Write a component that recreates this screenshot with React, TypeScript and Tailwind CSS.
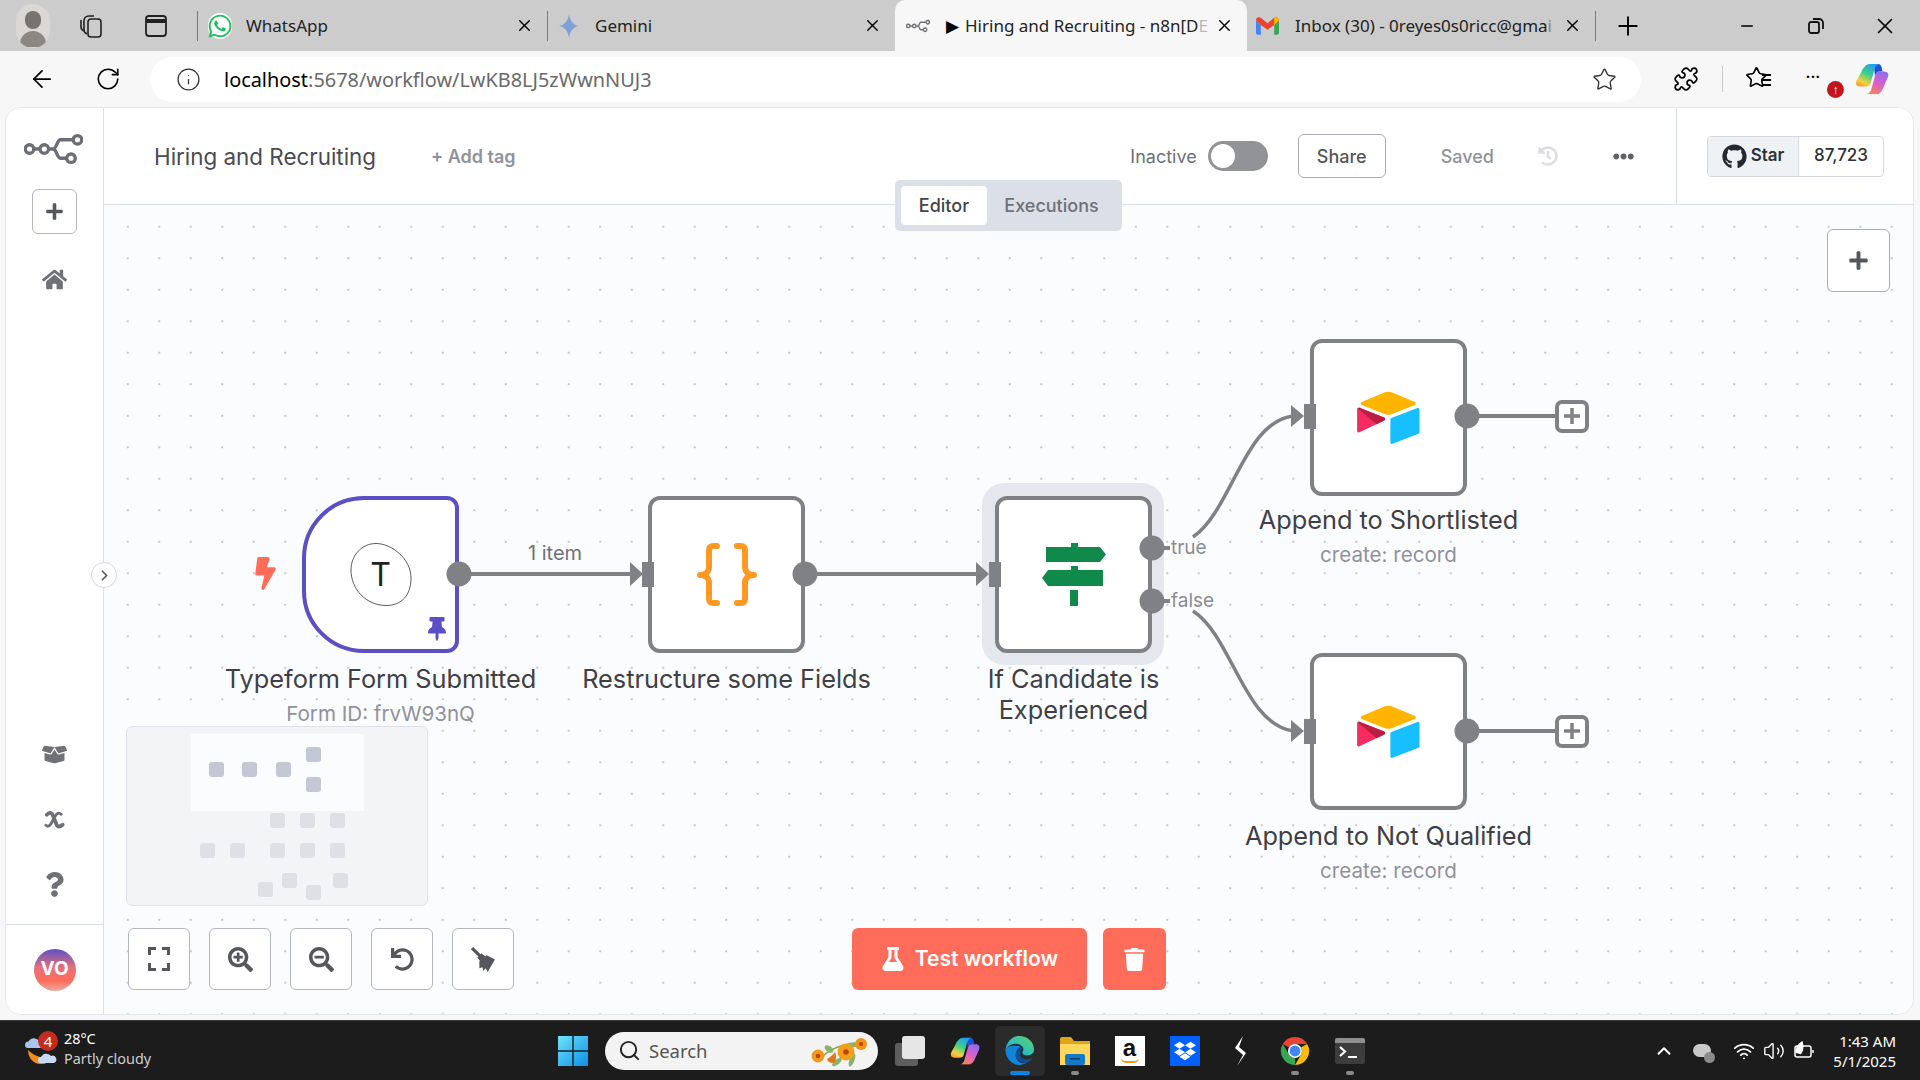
import { ArrowLeft, ChevronRight, ChevronUp, Info, Minus, Plus, Puzzle, RotateCw, Search, Star, Volume2, Wifi, X } from 'lucide-react';
import {
    FaBolt,
    FaBoxOpen,
    FaDropbox,
    FaEllipsisH,
    FaFlask,
    FaGithub,
    FaHistory,
    FaHome,
    FaPlus,
    FaQuestion,
    FaSearchMinus,
    FaSearchPlus,
    FaThumbtack,
    FaTrash,
    FaUndo,
    FaWhatsapp,
} from 'react-icons/fa';
import type { ReactNode } from 'react';

const EDGE = '#7f8185';

function N8nLogo({ className }: { className: string }) {
    return (
        <svg viewBox="0 0 64 34" fill="none" stroke="currentColor" strokeWidth="3.6" className={className}>
            <circle cx="6" cy="17" r="4.6" />
            <circle cx="22" cy="17" r="4.6" />
            <circle cx="58" cy="7" r="4.6" />
            <circle cx="51" cy="27" r="4.6" />
            <path d="M10.6 17h6.8M26.6 17h5c4 0 4-10 8-10h13.400M31.600 17c4 0 4 10 8 10h6.800" />
        </svg>
    );
}

function AirtableLogo() {
    return (
        <svg viewBox="0 0 200 170" className="w-[71px] h-[60px]">
            <path fill="#ffb400" d="M90.039 12.368 24.079 39.66c-3.667 1.519-3.63 6.729.062 8.192l66.235 26.266a24.58 24.58 0 0 0 18.12 0l66.236-26.266c3.69-1.463 3.729-6.673.062-8.192l-65.96-27.292a24.58 24.58 0 0 0-18.795 0" />
            <path fill="#18bfff" d="M105.312 88.46v65.617c0 3.12 3.147 5.258 6.048 4.108l73.806-28.648a4.42 4.42 0 0 0 2.79-4.108V60.813c0-3.121-3.147-5.258-6.048-4.108l-73.806 28.648a4.42 4.42 0 0 0-2.79 4.108" />
            <path fill="#f82b60" d="M88.078 91.846l-21.904 10.576-2.224 1.075-46.238 22.155c-2.93 1.414-6.672-.722-6.672-3.978V60.088c0-1.178.604-2.195 1.414-2.96a5 5 0 0 1 1.12-.84c1.104-.663 2.68-.84 4.02-.31L87.71 83.76c3.564 1.414 3.844 6.408.368 8.087" />
            <path fill="#ba1e45" d="M88.078 91.846l-21.904 10.576-53.72-45.295a5 5 0 0 1 1.12-.84c1.104-.663 2.68-.84 4.02-.31L87.71 83.76c3.564 1.414 3.844 6.408.368 8.087" />
        </svg>
    );
}

function NodeBox({ className, children, label }: { className: string; children: ReactNode; label: ReactNode }) {
    return (
        <div className={`absolute w-[157px] h-[157px] bg-white border-4 flex items-center justify-center ${className}`}>
            {children}
            <div className="absolute top-full left-1/2 -translate-x-1/2 w-[360px] mt-[14px] text-center text-[25.300px] leading-[31px] text-[#3f4046]">
                {label}
            </div>
        </div>
    );
}

function SubLabel({ children }: { children: ReactNode }) {
    return <div className="mt-[5px] text-[20.600px] leading-[30px] text-[#8f929b]">{children}</div>;
}

function ToolButton({ children }: { children: ReactNode }) {
    return (
        <button className="w-[62px] h-[62px] flex items-center justify-center bg-white border border-[#b4b7c0] rounded-[6px] text-[#55575c]">
            {children}
        </button>
    );
}

function Tab({ icon, title, iconPad, active, w }: { icon: ReactNode; title: ReactNode; iconPad: string; active?: boolean; w: string }) {
    return (
        <div className={`flex items-center h-full pr-[13px] shrink-0 ${w} ${iconPad} ${active ? 'bg-[#f7f7f7] rounded-t-[10px]' : ''}`}>
            {icon}
            <span className="flex-1 whitespace-nowrap text-[17px] text-[#222]">{title}</span>
            <X size={19} strokeWidth={1.8} className="ml-[6px] shrink-0 text-black" />
        </div>
    );
}

function WeatherIcon() {
    return (
        <div className="relative w-[36px] h-[40px] shrink-0">
            <svg viewBox="0 0 36 40" className="w-[36px] h-[40px]">
                <path d="M4 19c0 9 7 15 14 14 4 0 7-2 9-6-8 1-17-2-23-8z" fill="#f08c1d" />
                <path d="M1 14a3.500 3.500 0 0 1 3.500-3.500A6 6 0 0 1 15 10a3.500 3.500 0 0 1 1 7H3a3 3 0 0 1-2-3z" fill="#a9c4ef" />
                <path d="M14 29a3 3 0 0 1 3-3 6 6 0 0 1 10-1 3.500 3.500 0 0 1 3 7H16a3 3 0 0 1-2-3z" fill="#c6daf6" />
            </svg>
            <span className="absolute top-0 left-[14px] w-[20px] h-[20px] rounded-full bg-[#c42b1c] text-white text-[15px] leading-[20px] text-center">4</span>
        </div>
    );
}

function TaskSlot({ children, dot }: { children: ReactNode; dot?: boolean }) {
    return (
        <div className="relative w-[55px] h-[50px] flex items-center justify-center shrink-0">
            {children}
            {dot && <span className="absolute bottom-[1px] w-[8px] h-[4px] rounded-full bg-[#8a8a8a]" />}
        </div>
    );
}

function ChromeIcon() {
    return (
        <svg viewBox="0 0 32 32" className="w-[30px] h-[30px]">
            <path d="M16 1a15 15 0 0 1 13 7.500H16a7.500 7.500 0 0 0-6.500 3.750L3 8.500A15 15 0 0 1 16 1z" fill="#ea4335" />
            <path d="M29 8.500A15 15 0 0 1 16 31l6.500-11.250A7.500 7.500 0 0 0 22.500 12z" fill="#fbbc04" />
            <path d="M16 31A15 15 0 0 1 3 8.500l6.500 11.250A7.500 7.500 0 0 0 16 23.500z" fill="#34a853" />
            <circle cx="16" cy="16" r="7.500" fill="#fff" />
            <circle cx="16" cy="16" r="5.800" fill="#4285f4" />
        </svg>
    );
}

function EdgeIcon() {
    return (
        <svg viewBox="0 0 32 32" className="relative w-[31px] h-[31px]">
            <defs>
                <linearGradient id="edgetop" x1="0" y1="1" x2="1" y2="0">
                    <stop offset="0" stopColor="#1b9de2" />
                    <stop offset="0.5" stopColor="#35c1b1" />
                    <stop offset="1" stopColor="#66d45f" />
                </linearGradient>
            </defs>
            <path d="M16 1C24 1 31 7 31 15c0 4-3 6-7 6-3 0-5-1-5-3 0-1 1-2 1-3 0-3-3-6-8-6C7 9 3 12 1.500 16 2 8 8 1 16 1z" fill="url(#edgetop)" />
            <path d="M1.500 16C2 24 8 31 16 31c3 0 5-1 7-2-6 1-11-3-11-8 0-4 2-7 5-9-1-.5-3-1-5-1C7 11 2 12 1.500 16z" fill="#0f86dc" />
            <path d="M12 20c0 5 5 9 11 9 3-1 5-3 6-5-2 1-4 1-6 1-5 0-7-3-6-7 0-2 1-4 3-5-4-1-8 3-8 7z" fill="#0c4f9a" />
        </svg>
    );
}

function CopilotIcon({ className }: { className: string }) {
    return (
        <svg viewBox="0 0 48 48" className={className}>
            <defs>
                <linearGradient id="cpa" x1="0.7" y1="0" x2="0.2" y2="1">
                    <stop offset="0" stopColor="#1f9ff0" />
                    <stop offset="0.45" stopColor="#3fd08a" />
                    <stop offset="0.8" stopColor="#f5d33a" />
                    <stop offset="1" stopColor="#f59a3a" />
                </linearGradient>
                <linearGradient id="cpb" x1="0.8" y1="0" x2="0.3" y2="1">
                    <stop offset="0" stopColor="#8d6cf0" />
                    <stop offset="0.5" stopColor="#d95fd0" />
                    <stop offset="1" stopColor="#f6845a" />
                </linearGradient>
            </defs>
            <path d="M27 4h5c3 0 4 2 5 5l1 5h-4c-3 0-5 2-6 6l-1-8z" fill="#1d4fd8" />
            <path d="M14 8c2-3 4-4 8-4h12c-4 1-6 4-7 8l-5 18c-1 3-3 4-6 4H8c-4 0-6-3-5-7l7-13c1-3 2-4 4-6z" fill="url(#cpa)" />
            <path d="M19 44c3 0 6-3 6-5l3-6c1 5 3 8 6 11z" fill="#e8513a" />
            <path d="M34 14h6c5 0 7 4 5 8l-7 16c-2 4-5 6-9 6h-13c4 0 6-3 7-6l5-18c1-4 3-6 6-6z" fill="url(#cpb)" />
        </svg>
    );
}

export default function App() {
    return (
        <div className="w-[1920px] h-[1080px] overflow-hidden flex flex-col bg-[#f7f7f7] font-[Inter,sans-serif]">
            {/* Browser tab strip */}
            <div className="h-[51px] bg-[#cccccc] flex items-center shrink-0 font-['Noto_Sans',sans-serif]">
                <div className="ml-[16px] w-[34px] h-[44px] rounded-full bg-[#d9d8d4] flex flex-col items-center justify-center overflow-hidden shrink-0">
                    <span className="w-[16px] h-[18px] rounded-full bg-[#77746f]" />
                    <span className="w-[26px] h-[16px] -mb-[6px] mt-[2px] rounded-t-full bg-[#8b8782]" />
                </div>
                <svg viewBox="0 0 26 26" fill="none" stroke="#222" strokeWidth="1.600" className="ml-[29px] w-[26px] h-[26px] shrink-0">
                    <rect x="9" y="6" width="13" height="18" rx="3" />
                    <path d="M8 21c-2-1-3-2-3-4V8c0-3 2-5 5-5h5M5 18c-2-1-3-2-3-4V7" />
                </svg>
                <svg viewBox="0 0 26 26" fill="none" stroke="#222" strokeWidth="1.800" className="ml-[38px] w-[26px] h-[26px] shrink-0">
                    <rect x="3" y="3" width="20" height="20" rx="3" />
                    <path d="M3 8h20" strokeWidth="4" />
                </svg>
                <div className="ml-[28px] w-px h-[30px] bg-[#7b7b7b] shrink-0" />
                <Tab
                    w="w-[349px]"
                    iconPad="pl-[10px]"
                    icon={
                        <span className="w-[24px] h-[26px] mr-[14px] flex items-center justify-center rounded-full bg-white shrink-0">
                            <FaWhatsapp size={26} color="#1fbf5f" />
                        </span>
                    }
                    title="WhatsApp"
                />
                <div className="w-px h-[30px] bg-[#7b7b7b] shrink-0" />
                <Tab
                    w="w-[347px]"
                    iconPad="pl-[9px]"
                    icon={
                        <svg viewBox="0 0 24 24" className="w-[24px] h-[26px] mr-[14px] shrink-0">
                            <path d="M12 0c1 7 4 11 10 12-6 1-9 5-10 12-1-7-4-11-10-12 6-1 9-5 10-12z" fill="#7f9fd8" />
                        </svg>
                    }
                    title="Gemini"
                />
                <Tab
                    w="w-[352px]"
                    active
                    iconPad="pl-[11px]"
                    icon={
                        <span className="flex items-center shrink-0 mr-[6px]">
                            <N8nLogo className="w-[24px] h-[14px] text-[#6f7177]" />
                            <span className="ml-[16px] text-[17px] text-black">▶</span>
                        </span>
                    }
                    title={
                        <>
                            Hiring and Recruiting - n8n[D<span className="opacity-30">E</span>
                        </>
                    }
                />
                <Tab
                    w="w-[348px]"
                    iconPad="pl-[9px]"
                    icon={
                        <svg viewBox="0 0 24 18" className="w-[23px] h-[22px] mr-[16px] shrink-0">
                            <path d="M0 3v13c0 1 .7 2 2 2h3V8z" fill="#4285f4" />
                            <path d="M24 3v13c0 1-.7 2-2 2h-3V8z" fill="#34a853" />
                            <path d="M0 3c0-3 3-4 5-2.500L12 6l7-5.500c2-1.500 5-.5 5 2.500l-5 5-7 5-7-5z" fill="#ea4335" />
                            <path d="M19 .5c2-1.500 5-.5 5 2.500l-5 5z" fill="#fbbc04" />
                        </svg>
                    }
                    title={
                        <>
                            Inbox (30) - 0reyes0s0ricc@gma<span className="opacity-40">i</span>
                        </>
                    }
                />
                <div className="w-px h-[30px] bg-[#7b7b7b] shrink-0" />
                <Plus size={30} strokeWidth={1.5} className="ml-[17px] text-black" />
                <Minus size={18} strokeWidth={2} className="ml-[95px] text-black" />
                <svg viewBox="0 0 18 18" fill="none" stroke="#111" strokeWidth="1.800" className="ml-[51px] w-[18px] h-[18px]">
                    <rect x="2" y="5" width="10" height="11" rx="2" />
                    <path d="M6 2h6a4 4 0 0 1 4 4v6" />
                </svg>
                <X size={26} strokeWidth={1.6} className="ml-[47px] text-black" />
            </div>

            {/* Address bar */}
            <div className="h-[56px] flex items-center shrink-0 font-['Noto_Sans',sans-serif]">
                <ArrowLeft size={28} strokeWidth={1.5} className="ml-[28px] text-black" />
                <RotateCw size={26} strokeWidth={1.5} className="ml-[39px] text-black" />
                <div className="ml-[29px] w-[1491px] h-[45px] rounded-full bg-white flex items-center pl-[26px] pr-[24px]">
                    <Info size={25} strokeWidth={1.2} className="text-[#333]" />
                    <span className="ml-[23px] mt-[1px] text-[19.900px] text-black">
                        localhost<span className="text-[#6a6a6a]">:5678/workflow/LwKB8LJ5zWwnNUJ3</span>
                    </span>
                    <Star size={25} strokeWidth={1.3} className="ml-auto text-[#333]" />
                </div>
                <Puzzle size={26} strokeWidth={1.6} className="ml-[32px] text-black" />
                <div className="ml-[23px] w-px h-[26px] bg-[#c8c8c8]" />
                <span className="ml-[22px] relative w-[26px] h-[26px]">
                    <Star size={23} strokeWidth={1.7} className="text-black" />
                    <span className="absolute right-0 top-[8px] w-[9px] h-[2px] bg-black" />
                    <span className="absolute right-0 top-[13px] w-[9px] h-[2px] bg-black" />
                    <span className="absolute right-0 top-[18px] w-[9px] h-[2px] bg-black" />
                </span>
                <span className="ml-[35px] relative w-[36px] h-[26px]">
                    <span className="absolute left-0 top-[4px] text-[14px] leading-[14px] font-bold tracking-[1px] text-black">···</span>
                    <span className="absolute right-[-2px] bottom-[-6px] w-[17px] h-[17px] rounded-full bg-[#c3161c] text-white text-[12px] leading-[17px] text-center font-bold">↑</span>
                </span>
                <CopilotIcon className="ml-[12px] w-[36px] h-[36px]" />
            </div>

            {/* n8n app panel */}
            <div className="mx-[5px] h-[908px] w-[1909px] shrink-0 flex bg-white rounded-[16px] border border-[#e6e7ee] overflow-hidden">
                <aside className="w-[98px] shrink-0 border-r border-[#dbdfe7] flex flex-col items-center bg-white">
                    <N8nLogo className="mt-[24px] -ml-[3px] w-[59px] h-[34px] text-[#6b6e75]" />
                    <button className="mt-[23px] w-[45px] h-[45px] border border-[#b4b7c0] rounded-[6px] flex items-center justify-center text-[#55575c]">
                        <FaPlus size={19} />
                    </button>
                    <FaHome size={25} className="mt-[33px] text-[#6f7177]" />
                    <FaBoxOpen size={25} className="mt-[450px] text-[#6f7177]" />
                    <svg viewBox="0 0 22 20" fill="none" stroke="#6f7177" strokeWidth="4" strokeLinecap="round" className="mt-[43px] w-[21px] h-[20px]">
                        <path d="M3 4.500c3-3 5-2.500 6.500 1l3.500 9c1.200 3 3.500 3 6.500 .5" />
                        <path d="M18 4c-2-2-4-1.500-6 1.500l-5 9c-1.500 2.500-3.500 2.500-5 1" strokeWidth="3" />
                    </svg>
                    <FaQuestion size={25} className="mt-[42px] text-[#6f7177]" />
                    <div className="mt-[27px] w-full border-t border-[#dbdfe7] flex-1 flex items-center justify-center">
                        <span className="w-[42px] h-[42px] rounded-full bg-[linear-gradient(180deg,#5b4fc5_0%,#e8707a_45%,#ff6d5a_75%,#e8a9a0_100%)] flex items-center justify-center text-white text-[19px] font-bold">
                            VO
                        </span>
                    </div>
                </aside>

                <main className="relative flex-1 flex flex-col min-w-0">
                    <header className="h-[97px] shrink-0 border-b border-[#dbdfe7] bg-white flex items-center pl-[50px]">
                        <span className="mt-[1px] text-[22.400px] text-[#4a4c52]">Hiring and Recruiting</span>
                        <span className="ml-[55px] text-[18px] font-semibold text-[#8f929b]">+ Add tag</span>
                        <span className="ml-auto text-[18px] text-[#6f7177]">Inactive</span>
                        <span className="ml-[11px] w-[60px] h-[30px] rounded-full bg-[#929396] flex items-center px-[3px]">
                            <span className="w-[24px] h-[24px] rounded-full bg-white" />
                        </span>
                        <button className="ml-[30px] w-[88px] h-[44px] bg-white border border-[#a9acb5] rounded-[6px] text-[18px] font-medium text-[#55575c]">Share</button>
                        <span className="ml-[55px] text-[18px] font-medium text-[#909299]">Saved</span>
                        <FaHistory size={20} className="ml-[44px] text-[#dcdde2]" />
                        <FaEllipsisH size={21} className="ml-[55px] text-[#5f6166]" />
                        <div className="ml-[42px] w-[237px] h-full border-l border-[#dbdfe7] flex items-center pl-[30px]">
                            <div className="w-[177px] h-[41px] flex border border-[#d4d7df] rounded-[4px] overflow-hidden text-[#2d3036]">
                                <div className="w-[91px] bg-[#eff2f5] border-r border-[#d4d7df] flex items-center justify-center gap-[4px] text-[17px] font-semibold">
                                    <FaGithub size={25} className="text-[#24292f]" />
                                    Star
                                </div>
                                <div className="flex-1 flex items-center justify-center text-[17px] font-medium">87,723</div>
                            </div>
                        </div>
                    </header>

                    <div className="relative flex-1 bg-[#fbfcfe] bg-[radial-gradient(circle,#c4c6cd_1px,transparent_1.200px)] bg-[size:31.500px_31.500px] bg-[position:8px_6px]">
                        {/* Nodes */}
                        <NodeBox
                            className="left-[198px] top-[291px] border-[#5a4fc4] rounded-l-[62px] rounded-r-[12px]"
                            label={
                                <>
                                    Typeform Form Submitted
                                    <SubLabel>Form ID: frvW93nQ</SubLabel>
                                </>
                            }
                        >
                            <span className="relative w-[62px] h-[63px] flex items-center justify-center text-[32px] text-[#222]">
                                <svg viewBox="0 0 62 63" fill="none" stroke="#333" strokeWidth="0.800" className="absolute inset-0 w-[62px] h-[63px]">
                                    <path d="M26 .5C42 .5 61 16 61 35c0 17-9 27.500-25 27.500C16 62.500 1 46 1 27 1 12 12 .5 26 .5z" />
                                </svg>
                                T
                            </span>
                            <FaThumbtack size={24} className="absolute right-[6px] bottom-[8px] text-[#5a4fc4]" />
                        </NodeBox>
                        <NodeBox className="left-[544px] top-[291px] border-[#7f8185] rounded-[12px]" label="Restructure some Fields">
                            <svg viewBox="0 0 60 63" fill="none" stroke="#ff9922" strokeWidth="6" strokeLinecap="round" strokeLinejoin="round" className="w-[60px] h-[63px]">
                                <path d="M20 3h-4c-3 0-4 2-4 4v17c0 5-4 8-9 8 5 0 9 3 9 8v16c0 2 1 4 4 4h4" />
                                <path d="M40 3h4c3 0 4 2 4 4v17c0 5 4 8 9 8-5 0-9 3-9 8v16c0 2-1 4-4 4h-4" />
                            </svg>
                        </NodeBox>
                        <div className="absolute left-[878px] top-[278px] w-[182px] h-[182px] rounded-[22px] bg-[#e5e7ee]" />
                        <NodeBox
                            className="left-[891px] top-[291px] border-[#7f8185] rounded-[12px]"
                            label={
                                <>
                                    If Candidate is
                                    <br />
                                    Experienced
                                </>
                            }
                        >
                            <svg viewBox="0 0 64 63" fill="#0f8a4b" className="w-[64px] h-[63px]">
                                <path d="M29 0h7v4h22l6 7.500-6 7.500H4V4h25z" />
                                <path d="M29 23h7v4h25v16H6l-6-8 6-8h23z" />
                                <path d="M28 47h8v16h-8z" />
                            </svg>
                        </NodeBox>
                        <NodeBox
                            className="left-[1206px] top-[134px] border-[#7f8185] rounded-[12px]"
                            label={
                                <>
                                    <div className="-mt-[2px] mb-[2px]">Append to Shortlisted</div>
                                    <SubLabel>create: record</SubLabel>
                                </>
                            }
                        >
                            <AirtableLogo />
                        </NodeBox>
                        <NodeBox
                            className="left-[1206px] top-[448px] border-[#7f8185] rounded-[12px]"
                            label={
                                <>
                                    Append to Not Qualified
                                    <SubLabel>create: record</SubLabel>
                                </>
                            }
                        >
                            <AirtableLogo />
                        </NodeBox>

                        {/* Edges and handles, drawn in page coordinates */}
                        <svg viewBox="104 205 1808 809" className="absolute left-0 top-0 w-[1808px] h-[809px] pointer-events-none" fill="none">
                            <g stroke={EDGE} strokeWidth="4">
                                <path d="M459 574H632" />
                                <path d="M805 574H978" />
                                <path d="M1193 537C1232 510 1244 422 1293 416" strokeWidth="3.500" />
                                <path d="M1193 611C1232 636 1244 724 1293 731" strokeWidth="3.500" />
                                <path d="M1164 548h6M1164 601h6" />
                                <path d="M1467 416h90M1467 731h90" />
                            </g>
                            <g fill={EDGE}>
                                <circle cx="459" cy="574" r="12.500" />
                                <circle cx="805" cy="574" r="12.500" />
                                <circle cx="1152" cy="548" r="12.500" />
                                <circle cx="1152" cy="601" r="12.500" />
                                <circle cx="1467" cy="416" r="12.500" />
                                <circle cx="1467" cy="731" r="12.500" />
                                <path d="M630 562l13 12-13 12zM976 562l13 12-13 12zM1291 405l13 11-13 11zM1291 720l13 11-13 11z" />
                                <rect x="642" y="562" width="12" height="25" />
                                <rect x="989" y="562" width="12" height="25" />
                                <rect x="1304" y="404" width="12" height="25" />
                                <rect x="1304" y="719" width="12" height="25" />
                            </g>
                            <g stroke={EDGE} strokeWidth="4" fill="#fff">
                                <rect x="1557" y="402" width="30" height="29" rx="5" />
                                <rect x="1557" y="717" width="30" height="29" rx="5" />
                            </g>
                            <path d="M1572 408v16M1564 416h16M1572 723v16M1564 731h16" stroke={EDGE} strokeWidth="3.500" />
                        </svg>

                        {/* Edge labels and the trigger bolt */}
                        <span className="absolute left-[424px] top-[334px] text-[20px] leading-[28px] text-[#6f7177]">1 item</span>
                        <span className="absolute left-[1067px] top-[331px] text-[19px] leading-[24px] text-[#8a8c94]">true</span>
                        <span className="absolute left-[1067px] top-[384px] text-[19px] leading-[24px] text-[#8a8c94]">false</span>
                        <FaBolt size={33} className="absolute left-[145px] top-[352px] text-[#ff6d5a]" />

                        {/* Sidebar toggle */}
                        <span className="absolute -left-[13px] top-[357px] w-[26px] h-[26px] rounded-full bg-white border border-[#d4d7df] flex items-center justify-center text-[#55575c]">
                            <ChevronRight size={17} strokeWidth={2.4} />
                        </span>

                        {/* Add node */}
                        <button className="absolute right-[23px] top-[24px] w-[63px] h-[63px] bg-white border border-[#a9acb5] rounded-[6px] flex items-center justify-center text-[#55575c]">
                            <FaPlus size={21} />
                        </button>

                        {/* Minimap */}
                        <div className="absolute left-[22px] top-[521px] w-[302px] h-[180px] bg-[#f3f4f6] border border-[#dfe1ea] rounded-[6px]">
                            <div className="absolute left-[64px] top-[7px] w-[173px] h-[77px] bg-[#fbfcfe]" />
                            {[
                                [82, 35],
                                [115, 35],
                                [149, 35],
                                [179, 20],
                                [179, 50],
                            ].map(([x, y]) => (
                                <span key={`${x}-${y}`} className="absolute w-[15px] h-[15px] rounded-[3px] bg-[#c2c8d4]" style={{ left: x, top: y }} />
                            ))}
                            {[
                                [143, 86],
                                [173, 86],
                                [203, 86],
                                [73, 116],
                                [103, 116],
                                [143, 116],
                                [173, 116],
                                [203, 116],
                                [131, 155],
                                [155, 146],
                                [179, 158],
                                [206, 146],
                            ].map(([x, y]) => (
                                <span key={`${x}-${y}`} className="absolute w-[15px] h-[15px] rounded-[3px] bg-[#dfe0e5]" style={{ left: x, top: y }} />
                            ))}
                        </div>

                        {/* Canvas controls */}
                        <div className="absolute left-[24px] top-[723px] flex gap-[19px]">
                            <ToolButton>
                                <svg viewBox="0 0 22 24" fill="none" stroke="currentColor" strokeWidth="3" className="w-[22px] h-[24px]">
                                    <path d="M1.500 8V1.500H8M14 1.500h6.500V8M20.500 16v6.500H14M8 22.500H1.500V16" />
                                </svg>
                            </ToolButton>
                            <ToolButton>
                                <FaSearchPlus size={25} />
                            </ToolButton>
                            <ToolButton>
                                <FaSearchMinus size={25} />
                            </ToolButton>
                            <ToolButton>
                                <FaUndo size={23} />
                            </ToolButton>
                            <ToolButton>
                                <svg viewBox="0 0 24 24" fill="currentColor" className="w-[25px] h-[25px]">
                                    <path d="M1 1l9 9" stroke="currentColor" strokeWidth="3" />
                                    <path d="M6 10 10 6l4 3-5 5z" />
                                    <path d="M8 14l7-6 8 4-7 12-2-3.500-2 2.500-1-3.500-3 1z" />
                                </svg>
                            </ToolButton>
                        </div>

                        {/* Test workflow */}
                        <div className="absolute left-[748px] top-[723px] flex gap-[16px]">
                            <button className="w-[235px] h-[62px] rounded-[6px] bg-[#ff6d5a] text-white flex items-center justify-center gap-[10px] text-[21px] font-semibold">
                                <FaFlask size={24} />
                                Test workflow
                            </button>
                            <button className="w-[63px] h-[62px] rounded-[6px] bg-[#ff6d5a] text-white flex items-center justify-center">
                                <FaTrash size={23} />
                            </button>
                        </div>

                        {/* Workflow tabs */}
                        <div className="absolute left-[791px] -top-[25px] w-[227px] h-[51px] p-[6px] bg-[#dbdfe7] rounded-[5px] flex items-center text-[18px]">
                            <div className="w-[86px] h-[39px] bg-white rounded-[4px] flex items-center justify-center text-[#43454a] font-medium">Editor</div>
                            <div className="flex-1 text-center text-[#6f7177] font-medium">Executions</div>
                        </div>
                    </div>
                </main>
            </div>

            {/* Windows taskbar */}
            <div className="mt-[5px] h-[60px] bg-[#1c1c1c] border-t border-[#3a3a3a] flex items-center shrink-0 text-white font-['Noto_Sans',sans-serif]">
                <div className="w-[558px] pl-[24px] flex items-center shrink-0">
                    <WeatherIcon />
                    <div className="ml-[4px] -mt-[3px] text-[14.400px] leading-[20px]">
                        <div>28°C</div>
                        <div className="text-[#cfcfcf]">Partly cloudy</div>
                    </div>
                </div>
                <svg viewBox="0 0 30 30" className="w-[30px] h-[30px] shrink-0">
                    <defs>
                        <linearGradient id="winlogo" x1="0" y1="0" x2="1" y2="1">
                            <stop offset="0" stopColor="#6fe3fb" />
                            <stop offset="1" stopColor="#0a8fe8" />
                        </linearGradient>
                    </defs>
                    <path d="M0 0h14.300v14.300H0zM15.700 0H30v14.300H15.700zM0 15.700h14.300V30H0zM15.700 15.700H30V30H15.700z" fill="url(#winlogo)" />
                </svg>
                <div className="ml-[17px] w-[273px] h-[38px] rounded-full bg-[#f3f3f3] flex items-center pl-[13px] pr-[11px] text-[#444] shrink-0">
                    <Search size={23} strokeWidth={2} className="text-[#222]" />
                    <span className="ml-[8px] text-[18.500px] text-[#555]">Search</span>
                    <svg viewBox="0 0 58 32" className="ml-auto w-[58px] h-[32px]">
                        <path d="M14 21C24 12 34 10 46 8" stroke="#7c9a55" strokeWidth="1.500" fill="none" />
                        <ellipse cx="20" cy="14" rx="5" ry="3" fill="#8ab36a" transform="rotate(35 20 14)" />
                        <ellipse cx="28" cy="27" rx="6" ry="2.500" fill="#8ab36a" transform="rotate(-40 28 27)" />
                        <ellipse cx="43" cy="25" rx="7" ry="2.500" fill="#8ab36a" transform="rotate(-70 43 25)" />
                        <ellipse cx="43" cy="10" rx="5" ry="2.500" fill="#8ab36a" />
                        <circle cx="9" cy="21" r="6.500" fill="#ef9a1a" />
                        <path d="M18 24c3-2 6-4 8-7 2 4 1 10-2 11-3 0-5-1-6-4z" fill="#e2761b" />
                        <circle cx="37" cy="17" r="8.500" fill="#f0a01e" />
                        <circle cx="52" cy="9" r="6" fill="#ee9418" />
                        <circle cx="9" cy="21" r="2.200" fill="#c2410c" />
                        <circle cx="37" cy="17" r="2.800" fill="#c2410c" />
                        <circle cx="52" cy="9" r="2" fill="#c2410c" />
                    </svg>
                </div>
                <div className="ml-[4px] flex items-center">
                    <TaskSlot>
                        <span className="relative w-[30px] h-[30px]">
                            <span className="absolute left-0 bottom-0 w-[23px] h-[23px] rounded-[3px] bg-[#5e5e5e]" />
                            <span className="absolute right-0 top-0 w-[23px] h-[23px] rounded-[3px] bg-[#e6e6e6]" />
                        </span>
                    </TaskSlot>
                    <TaskSlot>
                        <CopilotIcon className="w-[32px] h-[32px]" />
                    </TaskSlot>
                    <TaskSlot>
                        <span className="absolute left-[3px] w-[50px] h-[50px] rounded-[5px] bg-[#2b2b2b]" />
                        <EdgeIcon />
                        <span className="absolute bottom-[1px] w-[20px] h-[4px] rounded-full bg-[#0a84e8]" />
                    </TaskSlot>
                    <TaskSlot dot>
                        <svg viewBox="0 0 30 30" className="w-[30px] h-[30px]">
                            <path d="M0 3a2 2 0 0 1 2-2h9l3 4h16v24H0z" fill="#e0a418" />
                            <path d="M0 8h30v21H0z" fill="#ffd75a" />
                            <rect x="5" y="18" width="20" height="11" rx="2" fill="#1479c9" />
                            <rect x="10" y="22" width="10" height="1.500" fill="#0b3d66" />
                        </svg>
                    </TaskSlot>
                    <TaskSlot>
                        <span className="relative w-[30px] h-[30px] bg-white flex justify-center text-[#111] text-[24px] leading-[24px] font-bold font-['Liberation_Sans',sans-serif]">
                            a
                            <span className="absolute bottom-[3px] left-[6px] w-[18px] h-[5px] rounded-b-full border-b-2 border-[#f59a1d]" />
                        </span>
                    </TaskSlot>
                    <TaskSlot>
                        <span className="w-[30px] h-[30px] bg-[#0061ff] flex items-center justify-center">
                            <FaDropbox size={22} color="#fff" />
                        </span>
                    </TaskSlot>
                    <TaskSlot>
                        <svg viewBox="0 0 14 30" className="w-[14px] h-[30px]" fill="#fff">
                            <path d="M10 0 2 12l8 7-6 11 9-13-7-6z" />
                        </svg>
                    </TaskSlot>
                    <TaskSlot dot>
                        <ChromeIcon />
                    </TaskSlot>
                    <TaskSlot dot>
                        <span className="w-[30px] h-[26px] rounded-[2px] bg-[#3c3c3c] relative overflow-hidden">
                            <span className="absolute inset-x-0 top-0 h-[5px] bg-[#8f8f8f]" />
                            <svg viewBox="0 0 30 26" fill="none" stroke="#fff" strokeWidth="2.200" className="absolute inset-0 w-[30px] h-[26px]">
                                <path d="M5 9l5 4.500L5 18M13 19h9" />
                            </svg>
                        </span>
                    </TaskSlot>
                </div>
                <div className="ml-auto flex items-center pr-[24px]">
                    <ChevronUp size={22} strokeWidth={2.2} className="text-white" />
                    <span className="ml-[18px] relative w-[20px] h-[18px]">
                        <span className="absolute left-0 top-[2px] w-[18px] h-[13px] rounded-full bg-[#c9c9c9]" />
                        <span className="absolute -right-[2px] -bottom-[3px] w-[11px] h-[11px] rounded-full bg-[#8a8a8a]" />
                    </span>
                    <Wifi size={22} strokeWidth={2} className="ml-[20px] text-white" />
                    <Volume2 size={22} strokeWidth={1.5} className="ml-[8px] text-white" />
                    <svg viewBox="0 0 22 20" fill="none" stroke="#fff" strokeWidth="1.500" className="ml-[8px] w-[22px] h-[20px]">
                        <rect x="2" y="5" width="16" height="11" rx="2" />
                        <path d="M20 9v3" />
                        <path d="M3 12c0-5 3-9 6-11 1 4 1 9-2 12" fill="#fff" />
                    </svg>
                    <div className="ml-[19px] w-[62px] text-right text-[15px] leading-[20px] whitespace-nowrap flex flex-col items-end">
                        <span>1:43 AM</span>
                        <span>5/1/2025</span>
                    </div>
                </div>
            </div>
        </div>
    );
}
